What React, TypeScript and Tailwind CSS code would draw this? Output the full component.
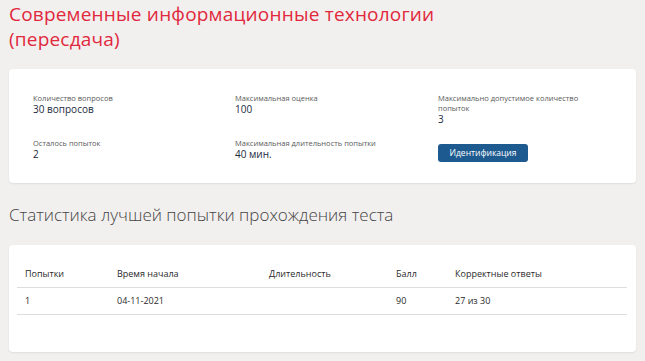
export default function App() {
  const info = [
    { label: "Количество вопросов", value: "30 вопросов" },
    { label: "Максимальная оценка", value: "100" },
    { label: "Максимально допустимое количество попыток", value: "3" },
    { label: "Осталось попыток", value: "2" },
    { label: "Максимальная длительность попытки", value: "40 мин." },
  ];

  return (
    <div className="min-h-screen bg-[#f2f0ef] px-[9px] pt-[2px] font-['Open_Sans',sans-serif]">
      <h1 className="text-[19px] font-medium leading-[25px] tracking-[0.2px] text-[#e1283c]">
        Современные информационные технологии
        <br />
        (пересдача)
      </h1>

      {/* Test info */}
      <div className="mt-[17px] h-[114px] rounded-sm bg-white pl-6 pt-[24px] shadow-[0_1px_2px_rgba(0,0,0,0.08)]">
        <div className="grid grid-cols-[202px_203px_160px] gap-y-[13px]">
          {info.map((it, i) => (
            <div key={it.label} className={i === 3 ? "col-start-1" : ""}>
              <p className="text-[7.5px] leading-[10px] text-[#5a5a5a]">{it.label}</p>
              <p className="text-[10px] font-medium leading-[12px] text-[#1b2a3d]">{it.value}</p>
            </div>
          ))}
          <div>
            <button className="h-[18px] w-[90px] rounded-[3px] bg-[#1d5a8f] text-[8.5px] font-medium text-white">
              Идентификация
            </button>
          </div>
        </div>
      </div>

      <h2 className="mt-[21px] text-[17px] font-light leading-[22px] text-[#444]">
        Статистика лучшей попытки прохождения теста
      </h2>

      {/* Best attempt */}
      <div className="mt-[19px] h-[107px] rounded-sm bg-white px-2 pt-[16px] shadow-[0_1px_2px_rgba(0,0,0,0.08)]">
        <table className="w-[610px] border-collapse text-left text-[9px] text-[#2a2a2a]">
          <thead>
            <tr className="h-[26px] border-b border-[#dedede]">
              <th className="w-[92px] pl-2 font-normal">Попытки</th>
              <th className="w-[152px] pl-2 font-normal">Время начала</th>
              <th className="w-[127px] pl-2 font-normal">Длительность</th>
              <th className="w-[59px] pl-2 font-normal">Балл</th>
              <th className="pl-2 font-normal">Корректные ответы</th>
            </tr>
          </thead>
          <tbody>
            <tr className="h-[27px] border-b border-[#dedede]">
              <td className="pl-2">1</td>
              <td className="pl-2">04-11-2021</td>
              <td className="pl-2"></td>
              <td className="pl-2">90</td>
              <td className="pl-2">27 из 30</td>
            </tr>
          </tbody>
        </table>
      </div>
    </div>
  );
}
